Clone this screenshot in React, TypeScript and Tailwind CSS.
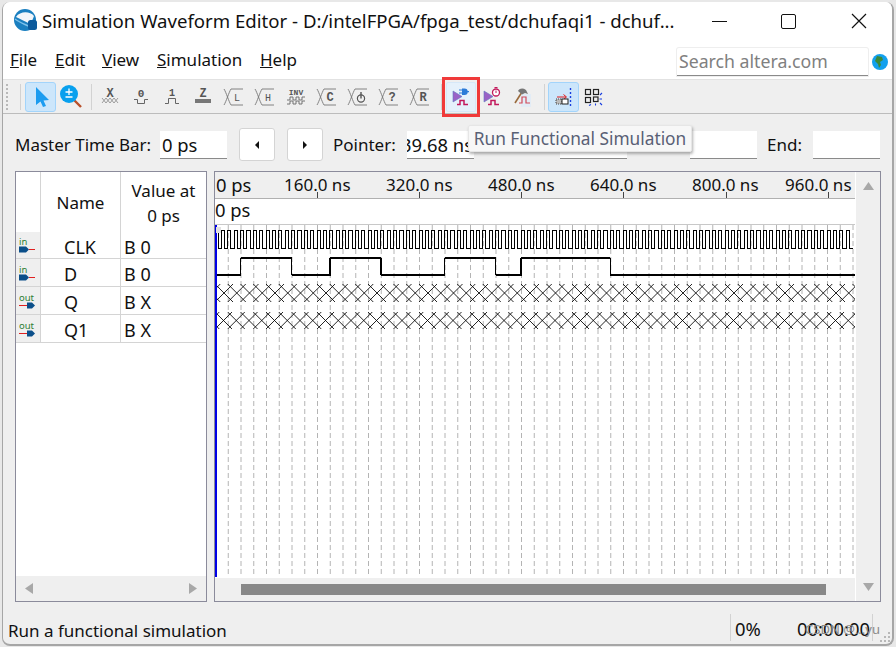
import type { ReactNode } from 'react'

const FONT = "font-['Noto_Sans',sans-serif]"
const GRID_STEP = 12.75
const WAVE_W = 640

function Logo() {
  return (
    <svg width="26" height="26" viewBox="0 0 26 26" className="shrink-0">
      <circle cx="12" cy="12" r="11" fill="#1a7fc0" />
      <path d="M3 9 C7 3 17 3 21 8 C20 11 19 13 17 16 C12 13 7 11 3 9 Z" fill="#f2f6fa" />
      <path d="M2 11 C6 14 11 16 15 18" stroke="#7cc0ea" strokeWidth="1.5" fill="none" />
      <rect x="15" y="12" width="9" height="10" rx="2.5" fill="#0b5a9c" />
    </svg>
  )
}

function IconBase({ children, w = 24 }: { children: ReactNode; w?: number }) {
  return (
    <svg width={w} height="24" viewBox={`0 0 ${w} 24`} className="block">
      {children}
    </svg>
  )
}

function GlyphText({ x, y, children, size = 9, bold = true }: { x: number; y: number; children: string; size?: number; bold?: boolean }) {
  return (
    <text
      x={x}
      y={y}
      textAnchor="middle"
      fontSize={size}
      fontWeight={bold ? 700 : 400}
      fontFamily="'Liberation Mono', monospace"
      fill="#555"
    >
      {children}
    </text>
  )
}

function UnknownIcon() {
  return (
    <IconBase>
      <GlyphText x={12} y={12} size={12}>X</GlyphText>
      <path d="M4 13 l4 5 l4 -5 l4 5 l4 -5 M4 18 l4 -5 l4 5 l4 -5 l4 5" stroke="#888" strokeWidth="0.8" fill="none" />
    </IconBase>
  )
}

function LowIcon() {
  return (
    <IconBase>
      <GlyphText x={12} y={12} size={11}>0</GlyphText>
      <path d="M5 14.5 H8.5 V18.5 H15.5 V14.5 H19" stroke="#666" fill="none" />
    </IconBase>
  )
}

function HighIcon() {
  return (
    <IconBase>
      <GlyphText x={12} y={11} size={10}>1</GlyphText>
      <path d="M5 18.5 H8.5 V13.5 H15.5 V18.5 H19" stroke="#666" fill="none" />
    </IconBase>
  )
}

function ZIcon() {
  return (
    <IconBase>
      <GlyphText x={12} y={12} size={12}>Z</GlyphText>
      <rect x="4" y="14" width="16" height="4" fill="#777" />
    </IconBase>
  )
}

const BUS_OUTLINE = 'M2 4 C4 7 7 17 9 20 H21 M2 20 C4 17 7 7 9 4 H21'

function BusIcon({ label, bold = false }: { label: string; bold?: boolean }) {
  return (
    <IconBase>
      <path d={BUS_OUTLINE} stroke="#777" strokeWidth="0.9" fill="none" />
      <GlyphText x={15} y={16} size={bold ? 12 : 10} bold={bold}>{label}</GlyphText>
    </IconBase>
  )
}

function InvertIcon() {
  return (
    <IconBase>
      <GlyphText x={12} y={10} size={8}>INV</GlyphText>
      <path d="M3 15 h3 v-3 h3 v3 h3 v-3 h3 v3 h3 v-3 h3 M3 19 h3 v-3 h3 v3 h3 v-3 h3 v3 h3 v-3 h3" stroke="#666" strokeWidth="0.9" fill="none" />
    </IconBase>
  )
}

function ClockBusIcon() {
  return (
    <IconBase>
      <path d={BUS_OUTLINE} stroke="#777" strokeWidth="0.9" fill="none" />
      <circle cx="15" cy="13.5" r="3.6" stroke="#555" strokeWidth="1.2" fill="none" />
      <path d="M15 7 V13.5" stroke="#555" strokeWidth="1.4" />
    </IconBase>
  )
}

function PurpleTriangle() {
  return <path d="M5 6 L14 11.5 L5 17 Z" fill="#9a62c6" stroke="#5f7ac0" strokeWidth="0.6" />
}

function PulseWave() {
  return <path d="M9 19.5 h3 v-4 h4 v4 h4" stroke="#c2185b" strokeWidth="1.5" fill="none" />
}

function RunIcon() {
  return (
    <IconBase w={26}>
      <PurpleTriangle />
      <PulseWave />
      <path d="M11 5 h3 M11 8 h3" stroke="#2b7bd8" />
      <path d="M14 3.5 h2.5 a3.2 3.2 0 0 1 0 6.4 h-2.5 Z" fill="#2b7bd8" />
      <path d="M19 6.7 h2" stroke="#2b7bd8" strokeWidth="1.3" />
    </IconBase>
  )
}

function TimingIcon() {
  return (
    <IconBase w={26}>
      <PurpleTriangle />
      <PulseWave />
      <circle cx="17" cy="7.5" r="3.5" fill="#fff" stroke="#c2185b" strokeWidth="1.3" />
      <path d="M17 5.5 v2.5" stroke="#c2185b" />
      <path d="M15.5 2.5 h3" stroke="#c2185b" strokeWidth="1.2" />
    </IconBase>
  )
}

function BuildIcon() {
  return (
    <IconBase w={26}>
      <path d="M11 9 H21 V22 H11 Z" fill="#e2ecf6" />
      <path d="M5 18 L12 7" stroke="#9a6a3c" strokeWidth="1.6" />
      <path d="M8 6 C10 3 13 3 16 5 L18 9 L15 8 L12 9.5 Z" fill="#777" />
      <path d="M9 18 h3 v-6 h4 v6 h4" stroke="#d14a5a" strokeWidth="1.2" fill="none" />
    </IconBase>
  )
}

function MasterFocusIcon() {
  return (
    <IconBase>
      <path d="M5 12 H14 M11.5 9.5 L14.5 12 L11.5 14.5" stroke="#e01b1b" fill="none" />
      <rect x="4" y="14" width="6" height="5" fill="#bbb" stroke="#444" strokeDasharray="1 1" />
      <rect x="10" y="14" width="6" height="5" fill="#fff" stroke="#222" />
      <path d="M18.5 3 V21" stroke="#1a3fe0" strokeWidth="1.4" strokeDasharray="2 2" />
    </IconBase>
  )
}

function SnapIcon() {
  return (
    <IconBase>
      <rect x="4.5" y="4.5" width="5" height="5" fill="none" stroke="#222" strokeWidth="1.2" />
      <rect x="12.5" y="4.5" width="5" height="5" fill="none" stroke="#222" strokeWidth="1.2" />
      <rect x="4.5" y="12.5" width="5" height="5" fill="none" stroke="#222" strokeWidth="1.2" />
      <rect x="12.5" y="12" width="4.5" height="4.5" fill="none" stroke="#222" strokeWidth="1.2" />
      <path d="M19 10 l2 -2 M18.5 14 h2.5 M19 18 l2 2 M14.5 18.5 v2 M10 19.5 l-2 1" stroke="#1a3fe0" strokeWidth="1.1" />
    </IconBase>
  )
}

function PinIcon({ out = false }: { out?: boolean }) {
  return (
    <svg width="18" height="20" viewBox="0 0 18 20" className="block overflow-visible">
      <text x="0" y="10" fontSize="9.5" fontFamily="'Noto Sans', sans-serif" fill="#2d7d32">
        {out ? 'out' : 'in'}
      </text>
      {out ? (
        <>
          <path d="M0 14.5 H8" stroke="#e02020" />
          <path d="M8 11.5 H13 L16 14.5 L13 17.5 H8 Z" fill="#0b4f8a" />
        </>
      ) : (
        <>
          <path d="M0 11.5 H7 L10 14.5 L7 17.5 H0 Z" fill="#0b4f8a" />
          <path d="M10 14.5 H16" stroke="#e02020" />
        </>
      )}
    </svg>
  )
}

function ToolButton({ children }: { children: ReactNode }) {
  return <div className="flex h-[28px] w-[31px] shrink-0 items-center justify-center">{children}</div>
}

function Sep({ className = '' }: { className?: string }) {
  return <div className={`h-[26px] w-px shrink-0 bg-[#d2d2d2] ${className}`} />
}

function Field({ value, className = '' }: { value?: string; className?: string }) {
  return (
    <div className={`flex h-[28px] w-[67px] shrink-0 items-center overflow-hidden whitespace-nowrap border-b border-[#8a8a8a] bg-white pt-[1px] text-[18.4px] text-[#111] ${className}`}>
      {value}
    </div>
  )
}

function StepButton({ dir }: { dir: 'left' | 'right' }) {
  return (
    <div className="flex h-[33px] w-[36px] shrink-0 items-center justify-center rounded-[3px] border border-[#d4d4d4] bg-white">
      <svg width="6" height="8" viewBox="0 0 6 8">
        <path d={dir === 'left' ? 'M5 0 L1 4 L5 8 Z' : 'M1 0 L5 4 L1 8 Z'} fill="#111" />
      </svg>
    </div>
  )
}

function Triangle({ dir, className = '' }: { dir: 'left' | 'right' | 'up' | 'down'; className?: string }) {
  const d = { left: 'M8 0 V11 L0 5.5 Z', right: 'M0 0 V11 L8 5.5 Z', up: 'M5.5 0 L11 8 H0 Z', down: 'M0 0 H11 L5.5 8 Z' }[dir]
  const vertical = dir === 'up' || dir === 'down'
  return (
    <svg width={vertical ? 11 : 8} height={vertical ? 8 : 11} viewBox={vertical ? '0 0 11 8' : '0 0 8 11'} className={className}>
      <path d={d} fill="#a8a8a8" />
    </svg>
  )
}

const signals = [
  { name: 'CLK', value: 'B 0', out: false, height: 'h-[27px]' },
  { name: 'D', value: 'B 0', out: false, height: 'h-[28px]' },
  { name: 'Q', value: 'B X', out: true, height: 'h-[28px]' },
  { name: 'Q1', value: 'B X', out: true, height: 'h-[28px]' },
]

// rise and fall of D, in units of the 20 ns grid
const dEdges = [2, 6, 9, 13, 18, 22, 24, 31]

function clkPath() {
  const half = GRID_STEP / 4
  let d = 'M0 23'
  for (let i = 0; i < 100; i++) {
    d += ` V5 H${(i * 2 + 1) * half} V23 H${(i * 2 + 2) * half}`
  }
  return d
}

function dPaths() {
  const low: string[] = []
  const high: string[] = []
  let x = 0
  dEdges.forEach((edge, i) => {
    const ex = edge * GRID_STEP
    if (i % 2 === 0) {
      low.push(`M${x} 50 H${ex} V33`)
    } else {
      high.push(`M${x} 33 H${ex}`)
      low.push(`M${ex} 33 V50`)
    }
    x = ex
  })
  low.push(`M${x} 50 H${WAVE_W}`)
  return { low: low.join(' '), high: high.join(' ') }
}

function lattice(top: number, bottom: number) {
  const h = bottom - top
  let d = ''
  for (let i = -2; i < 52; i++) {
    const x = i * GRID_STEP
    d += `M${x} ${top} L${x + h} ${bottom} M${x} ${bottom} L${x + h} ${top} `
  }
  return d
}

function Waveforms() {
  const grid = Array.from({ length: 50 }, (_, i) => (i + 1) * GRID_STEP)
  const d = dPaths()
  return (
    <svg width={WAVE_W} height="353" viewBox={`0 0 ${WAVE_W} 353`} className="block">
      {grid.map((x) => (
        <line key={x} x1={x + 0.5} x2={x + 0.5} y1="0" y2="352" stroke="#b4b4b4" strokeDasharray="5 3" />
      ))}
      <path d={clkPath()} stroke="#000" fill="none" shapeRendering="crispEdges" />
      <path d={d.low} stroke="#000" strokeWidth="1.5" fill="none" shapeRendering="crispEdges" />
      <path d={d.high} stroke="#000" strokeWidth="2.5" fill="none" shapeRendering="crispEdges" />
      <path d={lattice(59, 77)} stroke="#000" strokeWidth="0.85" fill="none" />
      <path d={lattice(87, 104)} stroke="#000" strokeWidth="0.85" fill="none" />
      <line x1="1" x2="1" y1="0" y2="352" stroke="#0000e6" strokeWidth="2" />
      <rect x="1" y="2" width="5" height="6" fill="#e2e2e2" />
    </svg>
  )
}

export default function App() {
  return (
    <div className={`${FONT} h-[647px] w-[896px] overflow-hidden bg-[#e8e8e8] pt-[2px] pb-[1px] pl-[2px] pr-[2px] text-[17px] text-[#111]`}>
      <div className="flex h-[644px] flex-col overflow-hidden rounded-[8px] border-b-2 border-l border-r-2 border-[#a6a6a6] bg-[#efefef]">
        <div className="flex h-[38px] shrink-0 items-center bg-white pl-[10px]">
          <Logo />
          <span className="ml-[3px] w-[640px] whitespace-nowrap text-[18.6px]">Simulation Waveform Editor - D:/intelFPGA/fpga_test/dchufaqi1 - dchuf...</span>
          <div className="ml-[30px] h-px w-[15px] bg-[#111]" />
          <div className="ml-[54px] h-[15px] w-[15px] rounded-[2px] border-[1.5px] border-[#111]" />
          <svg width="16" height="16" viewBox="0 0 16 16" className="ml-[55px]">
            <path d="M1 1 L15 15 M15 1 L1 15" stroke="#111" strokeWidth="1.2" />
          </svg>
        </div>

        <div className="flex h-[40px] shrink-0 items-center border-b border-[#e2e2e2] bg-white pl-[7px]">
          <span className="w-[45px]"><span className="underline">F</span>ile</span>
          <span className="w-[47px]"><span className="underline">E</span>dit</span>
          <span className="w-[55px]"><span className="underline">V</span>iew</span>
          <span className="w-[103px]"><span className="underline">S</span>imulation</span>
          <span className="w-[417px]"><span className="underline">H</span>elp</span>
          <div className="mt-[4px] flex h-[28px] w-[191px] items-center rounded-t-[2px] border-b border-[#8a8a8a] bg-white pl-[2px] text-[17.7px] text-[#808080] shadow-[0_0_0_1px_#eeeeee]">Search altera.com</div>
          <svg width="16" height="16" viewBox="0 0 16 16" className="mt-[4px] ml-[4px]">
            <circle cx="8" cy="8" r="8" fill="#12a0ee" />
            <path d="M5 2 L10 3 L11 6 L8 8 L9 11 L7 14 L6 10 L3 7 Z" fill="#3d8a3a" />
          </svg>
        </div>

        <div className="relative flex h-[34px] shrink-0 items-center border-b border-[#bcbcbc] pl-[3px]">
          <div className="h-[26px] w-[3px] shrink-0 border-l-2 border-dotted border-[#b8b8b8]" />
          <Sep className="ml-[11px]" />
          <div className="ml-[4px] flex h-[30px] w-[31px] shrink-0 items-center justify-center rounded-[3px] border border-[#a2d4fb] bg-[#cce6fb]">
            <svg width="20" height="24" viewBox="0 0 20 24">
              <path d="M5 2 L18 15 L12.5 15.5 L15 21 L12 22 L9.5 16.5 L5 20 Z" fill="#1c9cf0" />
            </svg>
          </div>
          <svg width="24" height="26" viewBox="0 0 24 26" className="ml-[3px] shrink-0">
            <path d="M15 16 L22 23" stroke="#b8502a" strokeWidth="2.4" />
            <circle cx="10" cy="10" r="9" fill="#08a0ee" />
            <path d="M6.5 8 H13.5 M10 4.5 V11 M6.5 13 H13.5" stroke="#fff" strokeWidth="1.3" />
          </svg>
          <Sep className="ml-[8px]" />
          <div className="ml-[2px] flex shrink-0 items-center">
            <ToolButton><UnknownIcon /></ToolButton>
            <ToolButton><LowIcon /></ToolButton>
            <ToolButton><HighIcon /></ToolButton>
            <ToolButton><ZIcon /></ToolButton>
            <ToolButton><BusIcon label="L" /></ToolButton>
            <ToolButton><BusIcon label="H" /></ToolButton>
            <ToolButton><InvertIcon /></ToolButton>
            <ToolButton><BusIcon label="C" bold /></ToolButton>
            <ToolButton><ClockBusIcon /></ToolButton>
            <ToolButton><BusIcon label="?" bold /></ToolButton>
            <ToolButton><BusIcon label="R" bold /></ToolButton>
          </div>
          <Sep className="ml-[6px]" />
          <div className="flex h-[40px] w-[38px] shrink-0 items-center justify-center border-[3px] border-[#f03a3a]">
            <div className="flex h-[30px] w-[30px] items-center justify-center rounded-[2px] border border-[#d6e8f8] bg-[#e5f1fb]">
              <RunIcon />
            </div>
          </div>
          <div className="-ml-[4px] flex">
            <ToolButton><TimingIcon /></ToolButton>
            <ToolButton><BuildIcon /></ToolButton>
          </div>
          <Sep className="ml-[6px]" />
          <div className="ml-[3px] flex h-[30px] w-[31px] shrink-0 items-center justify-center rounded-[3px] border border-[#a2d4fb] bg-[#cce6fb]">
            <MasterFocusIcon />
          </div>
          <div className="ml-[2px]"><SnapIcon /></div>
        </div>

        <div className="relative flex h-[57px] shrink-0 items-center pl-[12px] pt-[4px]">
          <span className="w-[145px] whitespace-nowrap pt-[1px]">Master Time Bar:</span>
          <Field value="0 ps" className="pl-[2px]" />
          <div className="ml-[12px]"><StepButton dir="left" /></div>
          <div className="ml-[12px]"><StepButton dir="right" /></div>
          <span className="ml-[10px] w-[74px] pt-[1px]">Pointer:</span>
          <Field value="39.68 ns" className="indent-[-6px]" />
          <Field className="ml-[86px]" />
          <Field className="ml-[63px]" />
          <span className="ml-[10px] w-[46px] pt-[1px]">End:</span>
          <Field />
          <div className="absolute top-[11px] left-[465px] flex h-[27px] w-[224px] items-center justify-center rounded-[2px] border border-[#e6e6e6] bg-[#f7f7f7] text-[17.3px] text-[#596075] shadow-[1px_2px_3px_rgba(0,0,0,0.3)]">
            Run Functional Simulation
          </div>
        </div>

        <div className="flex h-[431px] shrink-0 gap-[7px] pl-[12px]">
          <div className="flex w-[192px] shrink-0 flex-col border border-[#8b8b9b] bg-white">
            <div className="flex h-[60px] shrink-0">
              <div className="w-[25px] border-r border-[#d4d4d4]" />
              <div className="flex w-[80px] items-center justify-center border-r border-[#d4d4d4] pt-[1px]">Name</div>
              <div className="flex flex-1 flex-col items-center justify-center pt-[1px] leading-[25px]">
                <span>Value at</span>
                <span>0 ps</span>
              </div>
            </div>
            {signals.map((s) => (
              <div key={s.name} className={`flex ${s.height} shrink-0 border-b border-[#d4d4d4] text-[18px]`}>
                <div className="flex w-[25px] items-center justify-center border-r border-[#d4d4d4] bg-[#efefef]">
                  <PinIcon out={s.out} />
                </div>
                <div className="flex w-[80px] items-center border-r border-[#d4d4d4] pt-[4px] pl-[23px]">{s.name}</div>
                <div className="flex flex-1 items-center pt-[4px] pl-[3px]">{s.value}</div>
              </div>
            ))}
            <div className="flex-1" />
            <div className="flex h-[25px] shrink-0 items-center justify-between bg-[#efefef] px-[9px]">
              <Triangle dir="left" />
              <Triangle dir="right" />
            </div>
          </div>

          <div className="flex w-[667px] shrink-0 border border-[#8b8b9b] bg-white">
            <div className="flex w-[640px] shrink-0 flex-col">
              <div className="relative flex h-[27px] shrink-0 items-center overflow-hidden whitespace-nowrap border-b border-[#b0b0b0] bg-[#efefef]">
                <span className="w-[69px] shrink-0 pl-[1px] text-[18.4px]">0 ps</span>
                <span className="w-[102px] shrink-0">160.0 ns</span>
                <span className="w-[102px] shrink-0">320.0 ns</span>
                <span className="w-[102px] shrink-0">480.0 ns</span>
                <span className="w-[102px] shrink-0">640.0 ns</span>
                <span className="w-[93px] shrink-0">800.0 ns</span>
                <span className="w-[70px] shrink-0">960.0 ns</span>
                <div className="absolute bottom-0 left-[102px] h-[6px] w-px bg-[#444]" />
                <div className="absolute bottom-0 left-[204px] h-[6px] w-px bg-[#444]" />
                <div className="absolute bottom-0 left-[306px] h-[6px] w-px bg-[#444]" />
                <div className="absolute bottom-0 left-[408px] h-[6px] w-px bg-[#444]" />
                <div className="absolute bottom-0 left-[511px] h-[6px] w-px bg-[#444]" />
                <div className="absolute bottom-0 left-[613px] h-[6px] w-px bg-[#444]" />
              </div>
              <div className="flex h-[26px] shrink-0 items-center border-b border-[#c8c8c8] pb-[3px] text-[18.4px]">0 ps</div>
              <Waveforms />
              <div className="flex flex-1 items-center bg-[#efefef] pl-[26px]">
                <div className="h-[11px] w-[585px] bg-[#888888]" />
              </div>
            </div>
            <div className="flex flex-1 flex-col items-center justify-between border-l border-white bg-[#efefef] py-[10px]">
              <Triangle dir="up" />
              <Triangle dir="down" />
            </div>
          </div>
        </div>

        <div className="relative flex flex-1 items-end pb-[1px] pl-[5px]">
          <span className="w-[722px] whitespace-nowrap">Run a functional simulation</span>
          <div className="mb-[2px] h-[27px] w-px bg-[#d2d2d2]" />
          <span className="ml-[4px] w-[62px] text-[18.4px]">0%</span>
          <span className="text-[18.4px]">00:00:00</span>
          <div className="mb-[2px] ml-[2px] h-[27px] w-px bg-[#d2d2d2]" />
          <span className="absolute right-[12px] bottom-[5px] whitespace-nowrap text-[13px] text-[#8a8a8a]">CSDN @...yu</span>
          <div className="absolute right-[2px] bottom-[2px] grid grid-cols-3 gap-[2px]">
            <span className="col-start-3 h-[2px] w-[2px] bg-[#b8b8b8]" />
            <span className="col-start-2 h-[2px] w-[2px] bg-[#b8b8b8]" />
            <span className="h-[2px] w-[2px] bg-[#b8b8b8]" />
            <span className="h-[2px] w-[2px] bg-[#b8b8b8]" />
            <span className="h-[2px] w-[2px] bg-[#b8b8b8]" />
            <span className="h-[2px] w-[2px] bg-[#b8b8b8]" />
          </div>
        </div>
      </div>
    </div>
  )
}
